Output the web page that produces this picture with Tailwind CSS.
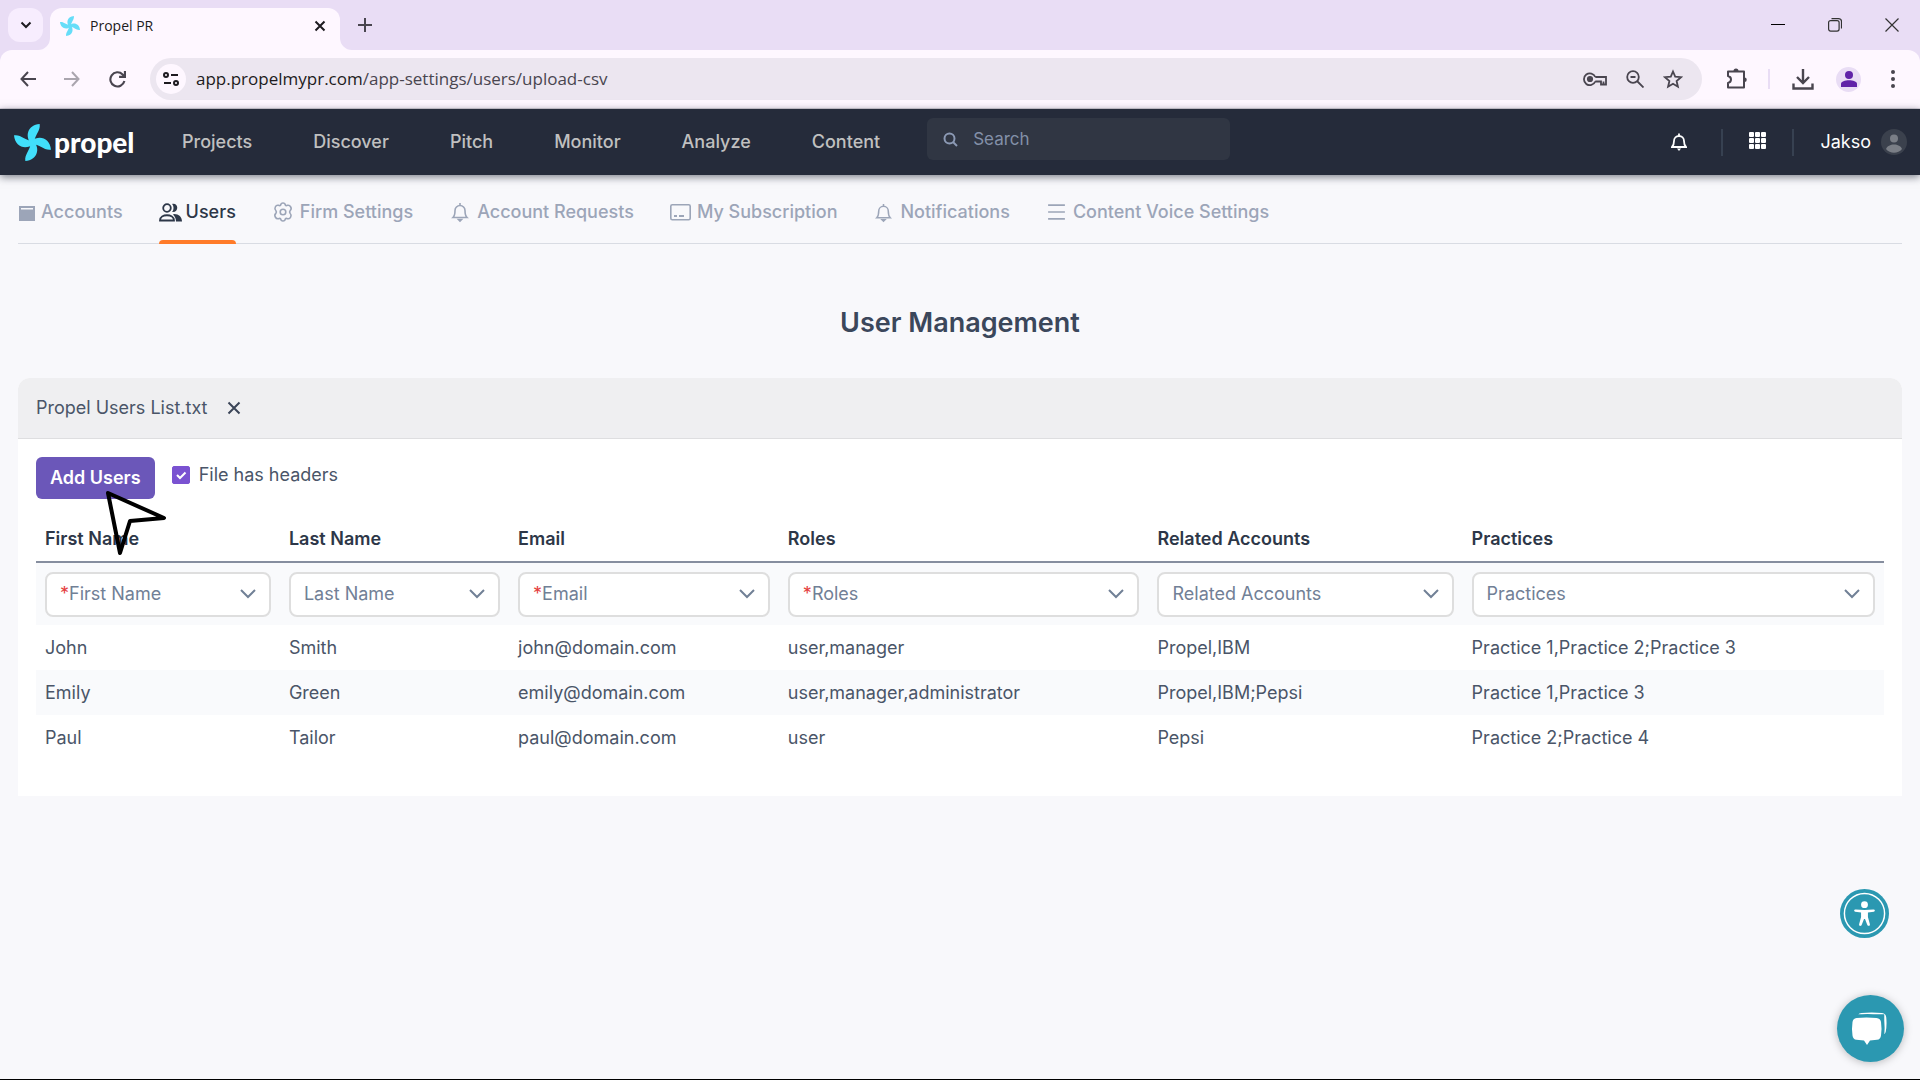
<!DOCTYPE html>
<html lang="en">
<head>
    <meta charset="UTF-8">
    <meta name="viewport" content="width=device-width, initial-scale=1.0">
    <title>Propel PR</title>
    <script src="https://cdn.jsdelivr.net/npm/@tailwindcss/browser@4"></script>
</head>
<body class="flex min-h-screen flex-col border-b border-black bg-[#f8f8fb] font-['Inter',sans-serif] text-lg text-[#4a5568]">

    <!-- Browser window -->
    <div class="bg-[#e9ddf5] font-['Open_Sans',sans-serif] text-[#1d1b20]">
        <div class="flex h-[50px] items-end">
            <button type="button" aria-label="Search tabs" class="mb-2 ml-2 flex h-[34px] w-[35px] items-center justify-center rounded-xl bg-[#f7edfe]">
                <svg class="size-3" viewBox="0 0 12 12" fill="none" stroke="currentColor" stroke-width="2"><path d="M1.5 3.5 6 8l4.500-4.500"/></svg>
            </button>
            <div class="relative ml-[7px] flex h-[42px] w-[290px] items-center rounded-t-xl bg-[#fef7ff] pr-[11px] pb-[7px] pl-[10px]">
                <svg class="absolute bottom-0 -left-3 size-3 text-[#fef7ff]" viewBox="0 0 12 12" fill="currentColor"><path d="M12 0v12H0A12 12 0 0 0 12 0Z"/></svg>
                <svg class="absolute -right-3 bottom-0 size-3 text-[#fef7ff]" viewBox="0 0 12 12" fill="currentColor"><path d="M0 0v12h12A12 12 0 0 1 0 0Z"/></svg>
                <svg class="size-5" viewBox="0 0 36 36" fill="#66ddf8">
                    <path id="blade" d="M16.500 19C10.500 12 13 1 25 0 26 7 20 10 19.500 19Z"/>
                    <use href="#blade" transform="rotate(90 18 18)"/>
                    <use href="#blade" transform="rotate(180 18 18)"/>
                    <use href="#blade" transform="rotate(270 18 18)"/>
                </svg>
                <span class="ml-[10px] flex-1 text-sm">Propel PR</span>
                <button type="button" aria-label="Close tab" class="p-[3px]">
                    <svg class="size-3" viewBox="0 0 12 12" fill="none" stroke="currentColor" stroke-width="2"><path d="m1.500 1.500 9 9m0-9-9 9"/></svg>
                </button>
            </div>
            <button type="button" aria-label="New tab" class="mb-[18px] ml-[18px]">
                <svg class="size-[14px]" viewBox="0 0 14 14" fill="none" stroke="#49454f" stroke-width="2"><path d="M7 0v14M0 7h14"/></svg>
            </button>
            <div class="mr-[21px] mb-[18px] ml-auto flex gap-[43px]">
                <button type="button" aria-label="Minimize">
                    <svg class="size-[14px]" viewBox="0 0 14 14" fill="none" stroke="#000" stroke-width="1"><path d="M0 6.500h14"/></svg>
                </button>
                <button type="button" aria-label="Restore">
                    <svg class="size-[14px]" viewBox="0 0 14 14" fill="none" stroke="#333" stroke-width="1.200"><rect x=".6" y="2.600" width="10.500" height="10.500" rx="2"/><path d="M3.500.6h7a3 3 0 0 1 3 3v7"/></svg>
                </button>
                <button type="button" aria-label="Close">
                    <svg class="size-[14px]" viewBox="0 0 14 14" fill="none" stroke="#333" stroke-width="1.200"><path d="m.5.5 13 13m0-13-13 13"/></svg>
                </button>
            </div>
        </div>

        <div class="flex h-[59px] items-center rounded-t-xl border-b border-[#d9d3dd] bg-[#fef7ff] text-[#49454f]">
            <button type="button" aria-label="Back" class="ml-5">
                <svg class="size-4" viewBox="0 0 16 16" fill="none" stroke="currentColor" stroke-width="2"><path d="M8 1 1.500 8 8 15M2 8h14"/></svg>
            </button>
            <button type="button" aria-label="Forward" class="ml-7 text-[#aaa5ae]">
                <svg class="size-4" viewBox="0 0 16 16" fill="none" stroke="currentColor" stroke-width="2"><path d="m8 1 6.500 7L8 15M14 8H0"/></svg>
            </button>
            <button type="button" aria-label="Reload" class="ml-[29px]">
                <svg class="size-[17px]" viewBox="0 0 16 16" fill="none" stroke="currentColor" stroke-width="2"><path d="M14.500 9.500A6.700 6.700 0 1 1 12.800 3.200L14.500 5M15 0v5.500H9.500"/></svg>
            </button>
            <div class="ml-6 flex h-[42px] flex-1 items-center rounded-full bg-[#ece6f0] pr-[19px] pl-[6px]">
                <button type="button" aria-label="Site information" class="flex size-[30px] items-center justify-center rounded-full bg-[#fef7ff] text-[#1d1b20]">
                    <svg class="size-4" viewBox="0 0 16 16" fill="none" stroke="currentColor" stroke-width="2"><circle cx="3" cy="4" r="2"/><path d="M8 4h7M1 12h7"/><circle cx="13" cy="12" r="2"/></svg>
                </button>
                <span class="ml-[10px] flex-1 text-[17px]"><span class="text-[#1d1b20]">app.propelmypr.com</span>/app-settings/users/upload-csv</span>
                <div class="flex items-center gap-[19px]">
                    <button type="button" aria-label="Passwords">
                        <svg class="h-[14px] w-6" viewBox="0 0 24 14" fill="none" stroke="currentColor" stroke-width="1.800"><circle cx="7" cy="7" r="2.200" fill="currentColor"/><path d="M12.300 5H23v7.500h-2.500V9.500M12.300 9.500H18v3h3M12.300 9.500A5.900 5.900 0 1 1 12.300 5"/></svg>
                    </button>
                    <button type="button" aria-label="Zoom">
                        <svg class="size-[18px]" viewBox="0 0 18 18" fill="none" stroke="currentColor" stroke-width="1.800"><circle cx="7" cy="7" r="5.800"/><path d="m11 11 6.500 6.500M4.500 7h5"/></svg>
                    </button>
                    <button type="button" aria-label="Bookmark">
                        <svg class="size-5" viewBox="0 0 20 20" fill="none" stroke="currentColor" stroke-width="1.800"><path d="m10 2.500 2.200 5.200 5.800.5-4.400 3.800 1.300 5.700L10 14.700l-4.900 3L6.400 12 2 8.200l5.800-.5Z"/></svg>
                    </button>
                </div>
            </div>
            <div class="mr-[25px] ml-6 flex items-center">
                <button type="button" aria-label="Extensions">
                    <svg class="size-[22px]" viewBox="0 0 22 22" fill="none" stroke="currentColor" stroke-width="2"><path d="M2 3.500h16v16H2V15c4-1 4-6 0-7Z" stroke-linejoin="round"/><path d="M7.500 3a2.500 2.500 0 0 1 5 0ZM18.500 9.500a2.200 2.200 0 0 1 0 4.500Z" fill="currentColor" stroke="none"/></svg>
                </button>
                <span class="ml-5 h-5 w-[2px] bg-[#e9ddf5]"></span>
                <button type="button" aria-label="Downloads" class="ml-[22px]">
                    <svg class="size-[22px]" viewBox="0 0 22 22" fill="none" stroke="currentColor" stroke-width="2.400"><path d="M11 1v13M5 9l6 6 6-6M1.500 15.500v5h19v-5"/></svg>
                </button>
                <button type="button" aria-label="Profile" class="ml-[22px] flex size-[25px] items-center justify-center rounded-full bg-[#e9ddf5] text-[#6023a8]">
                    <svg class="size-4" viewBox="0 0 16 16" fill="currentColor"><circle cx="8" cy="4" r="4"/><path d="M0 16v-3c0-5 16-5 16 0v3Z"/></svg>
                </button>
                <button type="button" aria-label="Menu" class="ml-[30px]">
                    <svg class="h-[18px] w-1" viewBox="0 0 4 18" fill="currentColor"><circle cx="2" cy="2" r="2"/><circle cx="2" cy="9" r="2"/><circle cx="2" cy="16" r="2"/></svg>
                </button>
            </div>
        </div>
    </div>

    <!-- App navigation -->
    <header class="flex h-[66px] items-center bg-[#252b3a] font-medium text-[#c0c0c0] shadow-[0_2px_8px_#252b3a99]">
        <a href="#" class="ml-[14px] flex w-[168px] items-center text-white">
            <svg class="size-[37px]" viewBox="0 0 36 36" fill="#41dffb">
                <use href="#blade"/>
                <use href="#blade" transform="rotate(90 18 18)"/>
                <use href="#blade" transform="rotate(180 18 18)"/>
                <use href="#blade" transform="rotate(270 18 18)"/>
            </svg>
            <span class="ml-[3px] font-['Lato',sans-serif] text-[28px] leading-8 font-black">propel</span>
        </a>
        <nav class="flex gap-[61px]">
            <a href="#">Projects</a>
            <a href="#">Discover</a>
            <a href="#">Pitch</a>
            <a href="#">Monitor</a>
            <a href="#">Analyze</a>
            <a href="#">Content</a>
        </nav>
        <label class="mb-[6px] ml-[47px] flex h-[42px] w-[303px] items-center rounded-md bg-[#303643] pl-4 text-[#8c9ab5]">
            <svg class="size-[15px]" viewBox="0 0 15 15" fill="none" stroke="currentColor" stroke-width="2"><circle cx="6.500" cy="6.500" r="5"/><path d="m10 10 4 4"/></svg>
            <input type="search" placeholder="Search" aria-label="Search" class="ml-[15px] min-w-0 flex-1 text-[17px] font-normal outline-none placeholder:text-[#8390a8]">
        </label>
        <div class="mr-[13px] ml-auto flex items-center text-white">
            <button type="button" aria-label="Alerts">
                <svg class="h-[18px] w-4" viewBox="0 0 16 18" fill="none" stroke="currentColor" stroke-width="1.800"><path d="M1 14c2-2 2-3 2-6a5 5 0 0 1 10 0c0 3 0 4 2 6ZM8 3V.5"/><path d="M6 15.500h4L8 18Z" fill="currentColor" stroke="none"/></svg>
            </button>
            <span class="ml-[34px] h-[27px] w-[2px] bg-[#374151]"></span>
            <button type="button" aria-label="Apps" class="ml-[26px] pb-1">
                <svg class="size-[17px]" viewBox="0 0 17 17" fill="currentColor"><rect width="5" height="5" rx="1"/><rect x="6" width="5" height="5" rx="1"/><rect x="12" width="5" height="5" rx="1"/><rect y="6" width="5" height="5" rx="1"/><rect x="6" y="6" width="5" height="5" rx="1"/><rect x="12" y="6" width="5" height="5" rx="1"/><rect y="12" width="5" height="5" rx="1"/><rect x="6" y="12" width="5" height="5" rx="1"/><rect x="12" y="12" width="5" height="5" rx="1"/></svg>
            </button>
            <span class="ml-[26px] h-[27px] w-[2px] bg-[#374151]"></span>
            <button type="button" class="ml-[26px] flex items-center gap-[10px] font-normal">
                Jakso
                <svg class="size-[26px]" viewBox="0 0 26 26"><circle cx="13" cy="13" r="13" fill="#3b414d"/><g fill="#7a7e86"><circle cx="13" cy="9.500" r="4"/><path d="M5 20c2-6 14-6 16 0-4 5-12 5-16 0Z"/></g></svg>
            </button>
        </div>
    </header>

    <main class="flex-1 px-[18px]">
        <!-- Settings tabs -->
        <nav class="flex h-[69px] gap-9 border-b border-[#d9dce3] font-medium text-[#9ca5b8]">
            <a href="#" class="flex items-center gap-[6px] pt-[6px]">
                <svg class="size-[17px]" viewBox="0 0 17 17" fill="currentColor"><path fill-rule="evenodd" d="M1 2h16v15H1ZM3 4v1.500h12V4Z"/></svg>
                Accounts
            </a>
            <a href="#" aria-current="page" class="relative flex items-center gap-1 pt-[6px] text-[#2d3748]">
                <svg class="h-[19px] w-[23px]" viewBox="0 0 23 19" fill="none" stroke="currentColor" stroke-width="1.800"><circle cx="8" cy="5" r="3.800"/><path d="M1 17.500c0-7 14-7 14 0Z"/><path d="M13 1c7-1.500 7 9 0 8 2-2 2-6 0-8ZM15 11c5 0 8 3 8 7.500h-6c0-3-1-5-3-7Z" fill="currentColor" stroke="none"/></svg>
                Users
                <span class="absolute inset-x-0 -bottom-px h-1 rounded-t-sm bg-[#ff7b29]"></span>
            </a>
            <a href="#" class="flex items-center gap-[6px] pt-[6px]">
                <svg class="size-[22px]" viewBox="-1 -1 22 22" fill="none" stroke="currentColor" stroke-width="1.600" stroke-linejoin="round"><path d="M7.700 3Q8 1 10 1t2.300 2Q13 4 14.500 3.300 16.500 2.800 17.700 5t-.5 3.500Q16 10 17.200 11.500q1.500 1.300.5 3.500t-3.200 1.700Q13 16 12.300 17 12 19 10 19t-2.300-2Q7 16 5.500 16.700 3.500 17.200 2.300 15t.5-3.500Q4 10 2.800 8.500 1.300 7.200 2.300 5t3.200-1.700Q7 4 7.700 3Z"/><circle cx="10" cy="10" r="2.800"/></svg>
                Firm Settings
            </a>
            <a href="#" class="flex items-center gap-[6px] pt-[6px]">
                <svg class="size-[22px]" viewBox="-1 -1 22 22" fill="none" stroke="currentColor" stroke-width="1.600"><path d="M3 15.500c2-2 2-4 2-7a5 5 0 0 1 10 0c0 3 0 5 2 7ZM10 3.500V1"/><path d="M8.500 17.500h3L10 19Z" fill="currentColor"/></svg>
                Account Requests
            </a>
            <a href="#" class="flex items-center gap-[6px] pt-[6px]">
                <svg class="h-[18px] w-[21px]" viewBox="0 0 21 18" fill="none" stroke="currentColor" stroke-width="1.600"><rect x=".8" y="1.800" width="19.400" height="15" rx="1.500"/><path d="M4 13h3m2 0h5" stroke-width="2"/></svg>
                My Subscription
            </a>
            <a href="#" class="flex items-center gap-[6px] pt-[6px]">
                <svg class="size-[21px]" viewBox="-1 -1 22 22" fill="none" stroke="currentColor" stroke-width="1.600"><path d="M3 15.500c2-2 2-4 2-7a5 5 0 0 1 10 0c0 3 0 5 2 7ZM10 3.500V1"/><path d="M8.500 17.500h3L10 19Z" fill="currentColor"/></svg>
                Notifications
            </a>
            <a href="#" class="flex items-center gap-[6px] pt-[6px]">
                <svg class="size-[21px]" viewBox="0 0 20 20" fill="none" stroke="currentColor" stroke-width="1.600"><path d="M2 3h16M2 9.500h16M2 16h16"/></svg>
                Content Voice Settings
            </a>
        </nav>

        <h1 class="mt-[59px] mb-[35px] text-center text-[27px] leading-10 font-semibold text-[#3b475b]">User Management</h1>

        <!-- Uploaded file -->
        <section class="rounded-t-xl bg-white">
            <div class="flex h-[61px] items-center gap-[19px] rounded-t-xl border-b border-[#dedee0] bg-[#efeff1] px-[18px]">
                Propel Users List.txt
                <button type="button" aria-label="Remove file">
                    <svg class="size-[14px]" viewBox="0 0 14 14" fill="none" stroke="#3b4558" stroke-width="2"><path d="m1.500 1.500 11 11m0-11-11 11"/></svg>
                </button>
            </div>
            <div class="px-[18px] pt-[18px] pb-9">
                <div class="flex gap-[17px]">
                    <button type="button" class="relative h-[42px] rounded-md bg-[#6b57b9] px-[14px] font-semibold text-white">
                        Add Users
                        <!-- pointer -->
                        <svg class="absolute top-[33px] left-[69px] h-[66px] w-[62px]" viewBox="0 0 62 66" fill="none" stroke="#000" stroke-width="4" stroke-linejoin="round"><path d="m3 3 56 25-34 3-10 32Z"/></svg>
                    </button>
                    <div class="flex h-9 items-center gap-[9px]">
                        <span class="grid size-[18px]">
                            <input type="checkbox" id="has-headers" checked class="peer col-start-1 row-start-1 size-[18px] appearance-none rounded-xs border border-[#7a52d1] checked:bg-[#7a52d1]">
                            <svg class="pointer-events-none invisible col-start-1 row-start-1 size-[18px] peer-checked:visible" viewBox="0 0 18 18" fill="none" stroke="#fff" stroke-width="2"><path d="m5 9 3 3 5.500-5.500"/></svg>
                        </span>
                        <label for="has-headers">File has headers</label>
                    </div>
                </div>

                <table class="mt-[17px] w-full table-fixed text-left">
                    <thead>
                        <tr class="h-[46px] border-b-2 border-[#868e9f] text-[#2d3748]">
                            <th class="w-[13.2%] px-[9px] font-semibold">First Name</th>
                            <th class="w-[12.4%] px-[9px] font-semibold">Last Name</th>
                            <th class="w-[14.6%] px-[9px] font-semibold">Email</th>
                            <th class="w-[20%] px-[9px] font-semibold">Roles</th>
                            <th class="w-[17%] px-[9px] font-semibold">Related Accounts</th>
                            <th class="px-[9px] font-semibold">Practices</th>
                        </tr>
                    </thead>
                    <tbody>
                        <tr class="h-[63px] bg-[#f9fafc] text-[#718096]">
                            <td class="px-[9px]">
                                <div class="flex h-[45px] items-center rounded-lg border-2 border-[#dedede] bg-white px-[13px]">
                                    <span class="text-[#e53e3e]">*</span>
                                    <select aria-label="First Name column" class="min-w-0 flex-1 appearance-none outline-none"><option>First Name</option></select>
                                    <svg class="h-[10px] w-4" viewBox="0 0 16 10" fill="none" stroke="currentColor" stroke-width="2"><path d="m1 1 7 7 7-7"/></svg>
                                </div>
                            </td>
                            <td class="px-[9px]">
                                <div class="flex h-[45px] items-center rounded-lg border-2 border-[#dedede] bg-white px-[13px]">
                                    <select aria-label="Last Name column" class="min-w-0 flex-1 appearance-none outline-none"><option>Last Name</option></select>
                                    <svg class="h-[10px] w-4" viewBox="0 0 16 10" fill="none" stroke="currentColor" stroke-width="2"><path d="m1 1 7 7 7-7"/></svg>
                                </div>
                            </td>
                            <td class="px-[9px]">
                                <div class="flex h-[45px] items-center rounded-lg border-2 border-[#dedede] bg-white px-[13px]">
                                    <span class="text-[#e53e3e]">*</span>
                                    <select aria-label="Email column" class="min-w-0 flex-1 appearance-none outline-none"><option>Email</option></select>
                                    <svg class="h-[10px] w-4" viewBox="0 0 16 10" fill="none" stroke="currentColor" stroke-width="2"><path d="m1 1 7 7 7-7"/></svg>
                                </div>
                            </td>
                            <td class="px-[9px]">
                                <div class="flex h-[45px] items-center rounded-lg border-2 border-[#dedede] bg-white px-[13px]">
                                    <span class="text-[#e53e3e]">*</span>
                                    <select aria-label="Roles column" class="min-w-0 flex-1 appearance-none outline-none"><option>Roles</option></select>
                                    <svg class="h-[10px] w-4" viewBox="0 0 16 10" fill="none" stroke="currentColor" stroke-width="2"><path d="m1 1 7 7 7-7"/></svg>
                                </div>
                            </td>
                            <td class="px-[9px]">
                                <div class="flex h-[45px] items-center rounded-lg border-2 border-[#dedede] bg-white px-[13px]">
                                    <select aria-label="Related Accounts column" class="min-w-0 flex-1 appearance-none outline-none"><option>Related Accounts</option></select>
                                    <svg class="h-[10px] w-4" viewBox="0 0 16 10" fill="none" stroke="currentColor" stroke-width="2"><path d="m1 1 7 7 7-7"/></svg>
                                </div>
                            </td>
                            <td class="px-[9px]">
                                <div class="flex h-[45px] items-center rounded-lg border-2 border-[#dedede] bg-white px-[13px]">
                                    <select aria-label="Practices column" class="min-w-0 flex-1 appearance-none outline-none"><option>Practices</option></select>
                                    <svg class="h-[10px] w-4" viewBox="0 0 16 10" fill="none" stroke="currentColor" stroke-width="2"><path d="m1 1 7 7 7-7"/></svg>
                                </div>
                            </td>
                        </tr>
                        <tr class="h-[45px]">
                            <td class="px-[9px]">John</td>
                            <td class="px-[9px]">Smith</td>
                            <td class="px-[9px]">john@domain.com</td>
                            <td class="px-[9px]">user,manager</td>
                            <td class="px-[9px]">Propel,IBM</td>
                            <td class="px-[9px]">Practice 1,Practice 2;Practice 3</td>
                        </tr>
                        <tr class="h-[45px] bg-[#f9fafc]">
                            <td class="px-[9px]">Emily</td>
                            <td class="px-[9px]">Green</td>
                            <td class="px-[9px]">emily@domain.com</td>
                            <td class="px-[9px]">user,manager,administrator</td>
                            <td class="px-[9px]">Propel,IBM;Pepsi</td>
                            <td class="px-[9px]">Practice 1,Practice 3</td>
                        </tr>
                        <tr class="h-[45px]">
                            <td class="px-[9px]">Paul</td>
                            <td class="px-[9px]">Tailor</td>
                            <td class="px-[9px]">paul@domain.com</td>
                            <td class="px-[9px]">user</td>
                            <td class="px-[9px]">Pepsi</td>
                            <td class="px-[9px]">Practice 2;Practice 4</td>
                        </tr>
                    </tbody>
                </table>
            </div>
        </section>
    </main>

    <!-- Floating helpers -->
    <div class="fixed right-4 bottom-[18px] flex flex-col items-center gap-[57px]">
        <button type="button" aria-label="Accessibility" class="mr-3">
            <svg class="size-[49px]" viewBox="0 0 50 50"><circle cx="25" cy="25" r="25" fill="#2b98b1"/><circle cx="25" cy="25" r="20.500" fill="none" stroke="#fff" stroke-width="1.500"/><g fill="#fff"><circle cx="25" cy="16" r="3.500"/><path d="M16 21q9 1 18 0c2-.2 2 2 .5 2.200L28.500 24v4.500l2 7.500c.4 2-2 2.300-2.700.5L25.500 30.500h-1l-2.300 6c-.7 1.800-3.100 1.500-2.700-.5l2-7.500V24l-6-.8c-1.500-.2-1.500-2.400.5-2.200Z"/></g></svg>
        </button>
        <button type="button" aria-label="Chat" class="flex size-[67px] items-center justify-center rounded-full bg-[#2b98b1] shadow-[0_1px_8px_#00000040]">
            <svg class="mr-1 h-[34px] w-[36px]" viewBox="-1 0 36 34" fill="#fff"><path d="M6 3q1-1.800 3.500-2 10-.8 20.500 0 3.800.4 4.200 4 .9 8-.5 15-.5 2-2.700 2.500V3Z"/><path stroke="#2b98b1" stroke-width="1.500" d="M4.500 3.500q11-1.500 22 0 4.500.5 5 5 .8 7 0 16-.5 3-4 3L28 27h3.500V3H6Z" fill="#2b98b1" opacity="1"/><path d="M4.500 6q10-1 20 0 4 .4 4.500 4 1 6.500 0 13.500-.5 4-4 4.300l-7 .6L15 33l-3-4.600-7.500-.6Q1 27.500.5 23.500q-1-7 0-13.500Q1 6.500 4.500 6Z"/></svg>
        </button>
    </div>
</body>
</html>
